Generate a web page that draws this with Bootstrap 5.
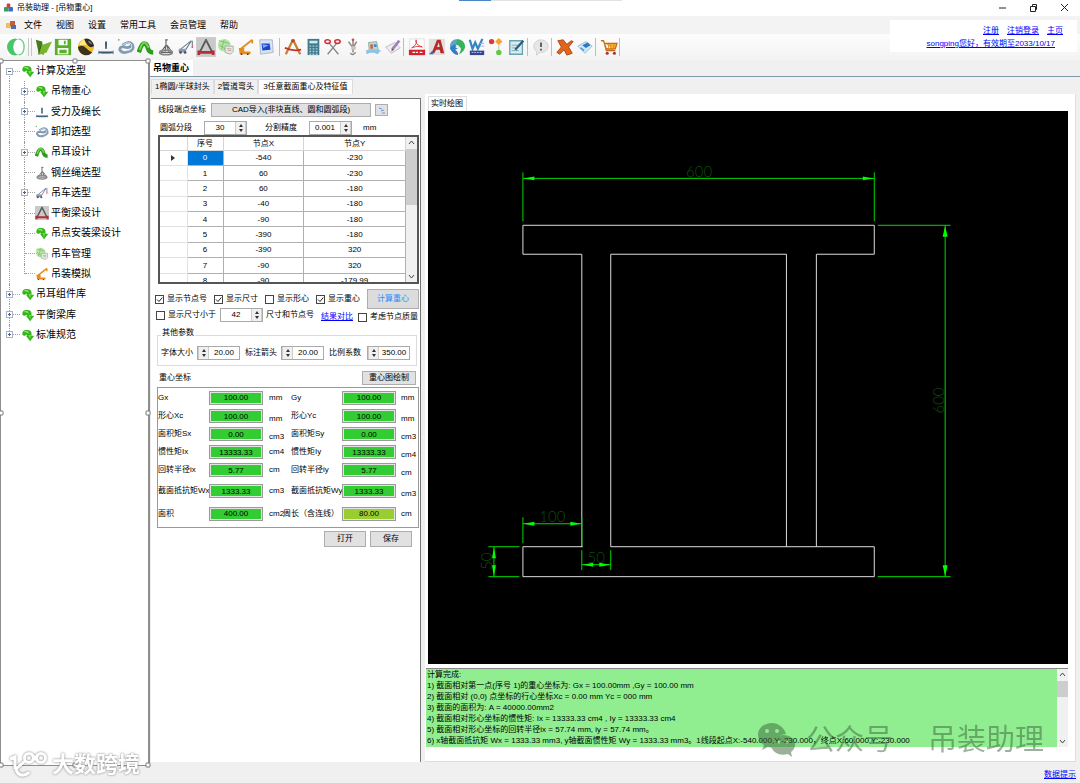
<!DOCTYPE html>
<html lang="zh-CN">
<head>
<meta charset="utf-8">
<meta name="viewport" content="width=device-width, initial-scale=1">
<title>吊装助理 - [吊物重心]</title>
<link href="https://cdn.jsdelivr.net/npm/bootstrap@5.3.0/dist/css/bootstrap.min.css" rel="stylesheet">
<script src="https://cdn.jsdelivr.net/npm/bootstrap@5.3.0/dist/js/bootstrap.bundle.min.js" defer></script>
<style>
body{font-family:"Liberation Sans","Noto Sans CJK SC",sans-serif;font-size:8px;line-height:12px;color:#000;background:#f0f0f0;height:100vh;overflow:hidden}
button,input,textarea{font:inherit;color:inherit}
a{color:#00f}
.titlebar{height:16px;background:#fff}
.titlebar h1{font-size:8px;line-height:12px;font-weight:400}
.winbtn{width:31px;height:16px;border:0;background:none;padding:0}
.accent{left:459px;top:0;width:163px;height:1px;background:#e2e2e2}
.accent i{display:block;width:32px;height:1px;background:#4a86c5}
.menubar{height:18px;background:#f3f3f3;font-size:9px;gap:14px;padding-left:6px}
.menubar svg{margin-right:-6px}
.menubar button{border:0;background:none;padding:0}
.tools{height:26px;padding:0 0 1px 6px;background:linear-gradient(#fdfdfd,#f3f3f3)}
.tools button{width:20px;height:20px;padding:1px;border:0;background:none}
.tools button svg{display:block;width:18px;height:18px}
.tools .wide{margin-right:3px}
.tools .active{background:#cfcfcf}
.sepa{width:4px;height:18px;border-left:1px solid #bdbdbd}
.sepa.dbl{width:7px;margin:0;border-left:0;background:linear-gradient(90deg,transparent 2px,#c6c6c6 2px 3px,transparent 3px 5px,#c6c6c6 5px 6px,transparent 6px)}
.account{top:20px;right:3px;width:187px;height:32px;background:#fff;padding:4px 14px 0 0;text-align:right;line-height:13px}
.account .second{padding-right:8px}
.tree{width:150px;background:#fff;border:solid #8e8e8e;border-width:1px 2px 1px 1px}
.tree ul{height:284px;font-size:10px}
.tree li{flex:1;display:flex;align-items:center;padding-left:5px;position:relative}
.tree li.sub{padding-left:20px}
.tree .ex{width:7px;height:7px;border:1px solid #a9b3c4;background:#fff;padding:0;position:relative;z-index:1;flex:none}
.tree .ex::before,.tree .ex.plus::after{content:"";position:absolute;left:1px;top:2px;width:3px;height:1px;background:#4b5f8f}
.tree .ex.plus::after{left:2px;top:1px;width:1px;height:3px}
.tree .dots{width:7px;border-top:1px dotted #a5a5a5}
.tree .dots.leaf{width:10px;margin-left:4px}
.tree li svg{width:14px;height:14px;margin:0 1px;flex:none}
.tree li.sub svg{margin:0}
.tree li.sub span{margin-left:2px}
.tree li::before{content:"";position:absolute;left:8px;top:0;bottom:0;border-left:1px dotted #999}
.tree li.first::before{top:10px}
.tree li.last::before{bottom:10px}
.tree li.sub::after{content:"";position:absolute;left:23px;top:0;bottom:0;border-left:1px dotted #999}
.tree li.end::after{bottom:10px}
.grip{width:5px;height:5px;background:#fff;border:1px solid #777;border-radius:1px;z-index:3}
.doctab{height:17px;border-bottom:1px solid #7d99ac;background:#f0f0f0}
.doctab span{background:#fff;font-size:9px;font-weight:700;line-height:16px;padding:0 4px 0 3px}
.subtabs{height:17px;padding:2px 0 0 1px}
.subtabs button{height:15px;padding:0 3px;border:1px solid #dcdcdc;border-bottom:0;background:#f0f0f0}
.subtabs button.on{background:#fff;padding:0 4px}
.form{width:270px;background:#fff;border-top:1px solid #777;border-right:1px solid #777;margin-left:1px;padding:4px 1px 0 7px}
.bx{border:1px solid #adadad;background:#e1e1e1;padding:0;text-align:center;line-height:12px;white-space:nowrap}
.spin{width:43px;height:14px;border:1px solid #aaa;background:#fff;flex:none}
.spin input{border:0;padding:0;min-width:0;width:100%;height:12px;text-align:center;background:none;outline:0}
.spin .ar{width:11px;background:#f0f0f0;border:solid #ccc;border-width:0 1px;padding:0;flex:none;display:flex;flex-direction:column;align-items:center;justify-content:center;gap:2px}
.ar i{border:2px solid transparent;border-top:0;border-bottom:3px solid #333}
.ar i+i{border-bottom:0;border-top:3px solid #333}
.gridbox{height:149px;border:2px solid #555;overflow:hidden}
.gridbox table{height:152px;table-layout:fixed;text-align:center;line-height:11px}
.gridbox th{font-weight:400;height:13px;padding:0;border:solid #d5d5d5;border-width:0 1px 1px 0}
.gridbox td{padding:0;border:1px solid #b0b0b0;border-width:0 1px 1px 0}
.gridbox td:first-child{border-color:#e2e2e2}
.gridbox .sel{background:#0078d7;color:#fff}
.c1{width:27px}
.c2{width:36px}
.sbar{width:11px;background:#f0f0f0;flex:none;display:flex;flex-direction:column;align-items:center}
.sbar svg{width:7px;height:12px;flex:none}
.sbar .thumb{width:11px;background:#cdcdcd}
.gthumb{height:56px}
.lthumb{height:16px}
.ck{display:flex;align-items:center;gap:3px;white-space:nowrap}
.ck input{appearance:none;width:9px;height:9px;border:1px solid #444;background:#fff;margin:0;flex:none}
.ck input:checked{background:url("data:image/svg+xml,%3Csvg xmlns='http://www.w3.org/2000/svg' viewBox='0 0 7 7'%3E%3Cpath d='M1 3.5L3 5.5 6.300 1.500' fill='none' stroke='%23222'/%3E%3C/svg%3E")}
.calc{width:54px;height:20px;background:#dcdcdc;color:#1e90ff}
.grpwrap{position:relative;margin:6px 0 0 -1px}
.grp{border:1px solid #dcdcdc;height:31px;margin:7px 2px 0 0}
.grp legend{position:absolute;top:-1px;left:4px;font-size:8px;line-height:12px;float:none;width:auto;margin:0;padding:0 1px;background:#fff}
.res{display:grid;grid-template-columns:51px 60px 22px 51px 59px 1fr;grid-template-rows:19px 18px 18px 18px 18px 24px 21px;align-items:center;border:1px solid #999;height:141px;margin-left:-1px;white-space:nowrap}
.res input{width:54px;height:14px;border:1px solid #9a9a9a;outline:1px solid #e3e3e3;outline-offset:-2px;background:#32cd32;text-align:center;padding:0}
.res input.alt{background:#9acd32}
.res .dn{padding-top:6px}
.peri{margin-left:-8px}
.rowa{height:14px}
.rowa label{width:53px}
.rowa #imp{width:160px;height:14px}
.rowa .pic{width:13px;height:12px;margin-left:4px;line-height:8px}
.rowb{height:14px;margin:4px 0 0 2px}
.rowb label{width:44px}
.rowb label+.spin+label{margin-left:18px}
.rowb span{margin-left:11px}
.rowc{height:20px;margin:5px 0 0 -3px;gap:7px}
.rowd{height:14px;margin:-1px 0 0 -2px}
.rowd .spin{margin:0 3px 0 4px}
.rowd a{margin:4px 5px 0 7px}
.rowd .ck:last-child{padding-top:4px}
.rowe{height:30px;padding:3px 0 0 3px}
.rowe label{width:36px}
.rowe .spin{margin-right:5px}
.rowe .spin:last-child{margin-left:2px}
.rowf{height:15px;margin:4px 3px 2px 1px}
.rowf .bx{width:54px;height:14px}
.rowg{gap:4px;margin:3px 7px 0 0}
.rowg .bx{width:42px;height:16px}
.view{background:#fff;margin:0 4px 0 4px;padding:2px 7px 0 3px;border-right:1px solid #ddd;border-bottom:1px solid #ddd}
.view .cap{height:15px;line-height:14px}
.cap span{border:1px solid #ddd;border-bottom:0;padding:0 3px 0 2px;display:inline-block}
.cad{background:#000;min-height:0}
.cad text{font-family:Lato,sans-serif;font-weight:300;font-size:15px;fill:#0a4d0a;text-anchor:middle}
.log{height:79px;margin:4px 0 0 -2px;border-top:1px solid #888;background:#90ee90}
.log textarea{border:0;padding:0 0 0 1px;resize:none;overflow:hidden;white-space:pre;line-height:11px;background:none;outline:0;display:block}
.tail{height:14px}
.foot{height:17px;padding-right:4px}
.wm{right:36px;bottom:21px;color:#3c643c;opacity:.5;font-size:29px;line-height:44px;pointer-events:none;gap:11px}
.wm .two{margin-left:24px}
.wm svg{width:38px;height:36px}
.brand{left:9px;bottom:2px;gap:4px;color:#fff;font-size:22px;font-weight:700;line-height:32px;filter:drop-shadow(0 0 1px #777);pointer-events:none;z-index:4}
.brand svg{width:39px;height:28px}
</style>
</head>
<body class="d-flex flex-column position-relative">
<svg class="d-none">
<symbol id="i-ring" viewBox="0 0 20 20"><rect width="20" height="20" fill="#fff"/><ellipse cx="9" cy="10" rx="9" ry="9.500" fill="#49c668"/><ellipse cx="13" cy="10" rx="6" ry="8.500" fill="#fff"/><path d="M13 1q6 1 6 9t-6 9" fill="none" stroke="#64d17e" stroke-width="1.500"/></symbol>
<symbol id="i-open" viewBox="0 0 20 20"><path d="M2 2l7 2 2 15-6-3z" fill="#457d1c"/><path d="M8 8l12-4-6 12-9 3z" fill="#78b52f"/><path d="M8 8l-3 10" stroke="#315d12"/></symbol>
<symbol id="i-save" viewBox="0 0 20 20"><path d="M1 1h18v18H1z" fill="#59ae2d"/><path d="M5 2h10v6H5zM4 11h12v7H4z" fill="#f5fff0"/><path d="M12 3v4M6 14h8M6 16h8" stroke="#59ae2d" stroke-width="2"/></symbol>
<symbol id="i-ball" viewBox="0 0 20 20"><circle cx="10" cy="10" r="9" fill="#efbd22"/><path d="M8 1q8-2 11 8-4 3-7-1Q9 4 8 1z" fill="#2b2b2b"/><path d="M1 10q5-3 9 1t7 5q-4 4-9 3-6-2-7-9z" fill="#3a3320"/><path d="M3 6q2-3 5-4 1 4 3 6-4-1-8 0z" fill="#ffe98d"/><path d="M12 3q3 0 5 4-3 0-5-4z" fill="#888"/></symbol>
<symbol id="i-force" viewBox="0 0 20 20"><path d="M10 4v8M2 16h16" stroke="#2f5268" stroke-width="2"/><path d="M2 14v4M18 14v4M5 17h10M9 10h2" stroke="#5c8bb0"/></symbol>
<symbol id="i-shackle" viewBox="0 0 20 20"><path d="M6 8q8-6 11-1 3 6-4 8-7 3-10-2 0-4 5-3 6 2 9-3" fill="none" stroke="#829bb2" stroke-width="3"/><path d="M6 8q7-5 10-1 2 5-4 7" fill="none" stroke="#d9e7f2"/><circle cx="2" cy="2" r="1" fill="#63ba4d"/></symbol>
<symbol id="i-arc" viewBox="0 0 20 20"><path d="M2 16Q5 6 8 6t4 5 6 5" fill="none" stroke="#2f9a1c" stroke-width="5"/><path d="M3 13Q6 5 8 5t5 6" fill="none" stroke="#79d94f" stroke-width="2"/></symbol>
<symbol id="i-rope" viewBox="0 0 20 20"><path d="M10 2v6q-4 5-5 8h11q-1-4-5-8M9 2h3M10 8l-1 7M11 8l2 7" fill="none" stroke="#666" stroke-width="1.300"/><ellipse cx="10" cy="16" rx="7" ry="2.500" fill="none" stroke="#888" stroke-width="2"/></symbol>
<symbol id="i-crane" viewBox="0 0 20 20"><path d="M2 14l14-11M9 14L16 3M17 3v6" fill="none" stroke="#6b7b96" stroke-width="1.200"/><path d="M2 12h8v4H2z" fill="#8b9bb5"/><circle cx="4" cy="16" r="1.500" fill="#555"/><circle cx="9" cy="16" r="1.500" fill="#555"/><circle cx="17" cy="10" r="1" fill="#cf4b54"/></symbol>
<symbol id="i-beam" viewBox="0 0 20 20"><rect width="20" height="20" fill="#c9c9c9"/><path d="M10 2L3 16M10 2l7 14" stroke="#555" stroke-width="2"/><path d="M1 16h18M2 14v5M18 14v5" stroke="#b72d35" stroke-width="3"/><path d="M9 1h2v4H9z" fill="#666"/></symbol>
<symbol id="i-manage" viewBox="0 0 20 20"><circle cx="8" cy="8" r="7" fill="#b5e5a4"/><path d="M2 3l12 3M3 8l10 7M8 2l-3 11" stroke="#7fbb70"/><path d="M9 9h9v6l-3 3-6-2z" fill="#e4ede3" stroke="#a0ada0"/><path d="M11 12h5M12 14h4" stroke="#c99"/></symbol>
<symbol id="i-sim" viewBox="0 0 20 20"><path d="M3 13L17 2M17 2v4" fill="none" stroke="#e48c1c" stroke-width="2"/><path d="M2 11h6v4h7v3H3z" fill="#e48c1c"/><circle cx="5" cy="18" r="1" fill="#5b3308"/><circle cx="12" cy="18" r="1" fill="#5b3308"/></symbol>
<symbol id="i-cube" viewBox="0 0 20 20"><path d="M3 2h14l1 14-14 2z" fill="#d9e3f3" stroke="#a8b4c8"/><path d="M5 6h9l1 7-9 1z" fill="#1845d0"/><path d="M6 7l7 1-6 3z" fill="#7da8ff"/></symbol>
<symbol id="i-compass" viewBox="0 0 20 20"><path d="M10 2L2 18M10 2l8 16" stroke="#c97e31" stroke-width="2.500"/><path d="M1 11q9 4 18 2" fill="none" stroke="#c0362a" stroke-width="2"/><circle cx="10" cy="3" r="2" fill="#b44a31"/></symbol>
<symbol id="i-calcu" viewBox="0 0 20 20"><rect x="4" y="1" width="13" height="18" fill="#41788c"/><path d="M6 3h9v3H6z" fill="#c7eced"/><path d="M6 9h9M6 12h9M6 15h9M6 18h9" stroke="#a7d5dd" stroke-width="1.500" stroke-dasharray="2 1.500"/></symbol>
<symbol id="i-cut" viewBox="0 0 20 20"><path d="M6 6l10 12M14 6L4 18" stroke="#888" stroke-width="1.500"/><ellipse cx="4" cy="4" rx="3" ry="2" fill="none" stroke="#d02e37" stroke-width="1.700"/><ellipse cx="15" cy="4" rx="3" ry="2" fill="none" stroke="#d02e37" stroke-width="1.700"/></symbol>
<symbol id="i-hook" viewBox="0 0 20 20"><path d="M5 4l5 7 4-7M10 2v14M7 17q3 3 6-1" fill="none" stroke="#8d8380" stroke-width="1.600"/><path d="M8 9h5v4H8z" fill="#c9c3bd"/><circle cx="10" cy="2" r="1.500" fill="#c0544b"/></symbol>
<symbol id="i-report" viewBox="0 0 20 20"><path d="M5 5l9-1 2 10-10 1z" fill="#b9ddc4" stroke="#8cac9d"/><path d="M2 14q6-3 17 0l-4 4q-6-3-12 0z" fill="#8cc4e8"/><path d="M7 7h3v5H7z" fill="#ce6558"/><path d="M11 7h3v3h-3z" fill="#458ac5"/></symbol>
<symbol id="i-pencil" viewBox="0 0 20 20"><path d="M2 10l6 7 10-6-6-6z" fill="#eee" stroke="#bbb"/><path d="M9 13L17 3" stroke="#a180bd" stroke-width="3"/><path d="M8 15l1-3 2 1z" fill="#6f5033"/></symbol>
<symbol id="i-pdf" viewBox="0 0 20 20"><path d="M2 1h16v18H2z" fill="#fff" stroke="#ddd"/><path d="M1 13h18v6H1z" fill="#d3222a"/><path d="M4 11q7-4 5-9-2 5 7 8-6-2-12 1" fill="none" stroke="#e33b3d"/><path d="M5 16h3M9 16h2M13 16h3" stroke="#fff" stroke-width="1.500"/></symbol>
<symbol id="i-acad" viewBox="0 0 20 20"><path d="M1 1h18v18H1z" fill="#e3dfdc"/><path d="M4 17L10 2h4l4 15h-4l-1-4H9l-2 4zM10 10h3l-1-5z" fill="#b52a2a"/><path d="M1 18l4-4 1 4z" fill="#3a6fb6"/></symbol>
<symbol id="i-globe" viewBox="0 0 20 20"><path d="M4 4Q9-1 14 4L9 8 3 13Q1 8 4 4z" fill="#5ba4cf"/><path d="M10 1q9 1 9 9-1 6-7 8 4-6 1-8l-4-3z" fill="#35b45a"/><path d="M2 11q3 7 9 8 1-3-3-6l4-2-5-4z" fill="#367ec4"/><path d="M8 10l4-2-1 4z" fill="#fff"/></symbol>
<symbol id="i-word" viewBox="0 0 20 20"><path d="M2 2l3 10 3-7 3 7 5-11" fill="none" stroke="#3686c6" stroke-width="2.500"/><path d="M2 14h16v5H2z" fill="#33468f"/><path d="M4 16h12" stroke="#c9d4f2" stroke-dasharray="2 1"/><path d="M13 6h5M13 9h5" stroke="#8cb8df"/></symbol>
<symbol id="i-nodes" viewBox="0 0 20 20"><circle cx="4" cy="4" r="3" fill="#d9393f"/><path d="M12 0l4 4-4 4-4-4z" fill="#f3a237"/><circle cx="12" cy="16" r="3" fill="#61cb3f"/><path d="M12 8v5" stroke="#bbb"/></symbol>
<symbol id="i-edit" viewBox="0 0 20 20"><path d="M2 3h14v15H2z" fill="#d7eef1" stroke="#6aa2b0" stroke-width="1.500"/><path d="M4 8h8M4 11h5M4 14h8" stroke="#75a9b5"/><path d="M8 13L17 3" stroke="#31597b" stroke-width="2.500"/></symbol>
<symbol id="i-tip" viewBox="0 0 20 20"><path d="M2 9a8 7 0 1 1 7 7l-4 3V15a8 7 0 0 1-3-6z" fill="#e6e6e6" stroke="#cfcfcf"/><path d="M10 5v5M10 12v2" stroke="#555" stroke-width="2"/></symbol>
<symbol id="i-del" viewBox="0 0 20 20"><path d="M2 3l6-1 4 5 5-4 2 1-5 6 4 7-6 2-3-6-5 5-3-2 5-6z" fill="#e3641b" stroke="#a8430e"/></symbol>
<symbol id="i-eraser" viewBox="0 0 20 20"><path d="M2 9l9-5 7 5-8 8z" fill="#cde8f6" stroke="#8fc0dd"/><path d="M7 8l6-3 3 3-5 3z" fill="#3274bf"/><path d="M5 11l4 3" stroke="#5a9ed0" stroke-width="2"/></symbol>
<symbol id="i-cart" viewBox="0 0 20 20"><path d="M1 3h3l3 11h10M5 6h14l-2 6H7z" fill="#f6b42c" stroke="#c46b14" stroke-width="1.300"/><path d="M9 6l1 6M12 6v6M16 6l-1 6" stroke="#dd7a20"/><circle cx="8" cy="17" r="1.700" fill="#a33"/><circle cx="16" cy="17" r="1.700" fill="#a33"/></symbol>
<symbol id="i-green" viewBox="0 0 20 20"><path d="M2 7q1-5 7-4 6 0 6 5v3h4l-6 8-6-8h2q-1-3-3 0-5 0-4-4z" fill="#37b51c"/><path d="M4 6q2-3 6-1l1 3q-4-3-7-2z" fill="#9cec78"/><path d="M11 10l3 0-1 6z" fill="#85dd5b"/></symbol>
</svg>

<header class="titlebar d-flex align-items-center flex-shrink-0">
<svg class="ms-1 me-1" width="9" height="10" viewBox="0 0 10 10" aria-hidden="true"><rect x="3" width="4" height="5" rx="1" fill="#c8453d"/><rect y="4" width="5" height="5" rx="1" fill="#3b9c57"/><rect x="5" y="4" width="5" height="5" rx="1" fill="#3f6cc0"/></svg>
<h1 class="m-0 flex-grow-1">吊装助理 - [吊物重心]</h1>
<button class="winbtn" aria-label="最小化"><svg width="9" height="9"><path d="M1 5h7" stroke="#222"/></svg></button>
<button class="winbtn" aria-label="还原"><svg width="9" height="9"><path d="M1.500 3.500h5v5h-5zM3.500 3V1.500h4v5H7" fill="none" stroke="#222"/></svg></button>
<button class="winbtn" aria-label="关闭"><svg width="9" height="9"><path d="M1 1l7 7M8 1L1 8" stroke="#222"/></svg></button>
</header>
<div class="accent position-absolute"><i></i></div>
<nav class="menubar d-flex align-items-center flex-shrink-0">
<svg width="10" height="10" viewBox="0 0 10 10" aria-hidden="true"><path d="M0 3h5v5H0z" fill="#eac05b"/><path d="M4 1h5v5H4z" fill="#cb5c39"/><path d="M5 5h5v4H5z" fill="#4770b5"/></svg>
<button>文件</button><button>视图</button><button>设置</button><button>常用工具</button><button>会员管理</button><button>帮助</button>
</nav>
<div class="tools d-flex align-items-center flex-shrink-0" role="toolbar" aria-label="工具栏">
<button><svg><use href="#i-ring"/></svg></button><span class="sepa dbl"></span>
<button><svg><use href="#i-open"/></svg></button><button class="wide"><svg><use href="#i-save"/></svg></button>
<button><svg><use href="#i-ball"/></svg></button><button><svg><use href="#i-force"/></svg></button><button><svg><use href="#i-shackle"/></svg></button><button><svg><use href="#i-arc"/></svg></button><button><svg><use href="#i-rope"/></svg></button><button><svg><use href="#i-crane"/></svg></button><button class="active"><svg><use href="#i-beam"/></svg></button><button><svg><use href="#i-manage"/></svg></button><button><svg><use href="#i-sim"/></svg></button><button class="wide"><svg><use href="#i-cube"/></svg></button><span class="sepa"></span>
<button><svg><use href="#i-compass"/></svg></button><button><svg><use href="#i-calcu"/></svg></button><button><svg><use href="#i-cut"/></svg></button><button><svg><use href="#i-hook"/></svg></button><button><svg><use href="#i-report"/></svg></button><button><svg><use href="#i-pencil"/></svg></button><span class="sepa"></span>
<button><svg><use href="#i-pdf"/></svg></button><button><svg><use href="#i-acad"/></svg></button><button><svg><use href="#i-globe"/></svg></button><button><svg><use href="#i-word"/></svg></button><button><svg><use href="#i-nodes"/></svg></button><button><svg><use href="#i-edit"/></svg></button><span class="sepa"></span>
<button><svg><use href="#i-tip"/></svg></button><span class="sepa"></span>
<button><svg><use href="#i-del"/></svg></button><button><svg><use href="#i-eraser"/></svg></button><span class="sepa"></span>
<button><svg><use href="#i-cart"/></svg></button><span class="sepa"></span>
</div>
<div class="account position-absolute"><div class="d-flex justify-content-end gap-2"><a href="#">注册</a><a href="#">注销登录</a><a href="#">主页</a></div><div class="second"><a href="#">songping您好，有效期至2033/10/17</a></div></div>

<div class="d-flex flex-grow-1" style="min-height:0">
<aside class="tree flex-shrink-0 position-relative">
<ul class="list-unstyled m-0 d-flex flex-column">
<li class="first"><button class="ex" aria-label="折叠"></button><i class="dots"></i><svg><use href="#i-green"/></svg><span>计算及选型</span></li>
<li class="sub"><button class="ex plus" aria-label="展开"></button><i class="dots"></i><svg><use href="#i-green"/></svg><span>吊物重心</span></li>
<li class="sub"><button class="ex plus" aria-label="展开"></button><i class="dots"></i><svg><use href="#i-force"/></svg><span>受力及绳长</span></li>
<li class="sub"><i class="dots leaf"></i><svg><use href="#i-shackle"/></svg><span>卸扣选型</span></li>
<li class="sub"><button class="ex plus" aria-label="展开"></button><i class="dots"></i><svg><use href="#i-arc"/></svg><span>吊耳设计</span></li>
<li class="sub"><i class="dots leaf"></i><svg><use href="#i-rope"/></svg><span>钢丝绳选型</span></li>
<li class="sub"><button class="ex plus" aria-label="展开"></button><i class="dots"></i><svg><use href="#i-crane"/></svg><span>吊车选型</span></li>
<li class="sub"><i class="dots leaf"></i><svg><use href="#i-beam"/></svg><span>平衡梁设计</span></li>
<li class="sub"><i class="dots leaf"></i><svg><use href="#i-green"/></svg><span>吊点安装梁设计</span></li>
<li class="sub"><i class="dots leaf"></i><svg><use href="#i-manage"/></svg><span>吊车管理</span></li>
<li class="sub end"><i class="dots leaf"></i><svg><use href="#i-sim"/></svg><span>吊装模拟</span></li>
<li><button class="ex plus" aria-label="展开"></button><i class="dots"></i><svg><use href="#i-green"/></svg><span>吊耳组件库</span></li>
<li><button class="ex plus" aria-label="展开"></button><i class="dots"></i><svg><use href="#i-green"/></svg><span>平衡梁库</span></li>
<li class="last"><button class="ex plus" aria-label="展开"></button><i class="dots"></i><svg><use href="#i-green"/></svg><span>标准规范</span></li>
</ul>
<i class="grip position-absolute top-0 start-0 translate-middle"></i><i class="grip position-absolute top-0 start-50 translate-middle"></i><i class="grip position-absolute top-0 start-100 translate-middle"></i>
<i class="grip position-absolute top-50 start-0 translate-middle"></i><i class="grip position-absolute top-50 start-100 translate-middle"></i>
<i class="grip position-absolute top-100 start-0 translate-middle"></i><i class="grip position-absolute top-100 start-50 translate-middle"></i><i class="grip position-absolute top-100 start-100 translate-middle"></i>
</aside>

<main class="d-flex flex-column flex-grow-1" style="min-width:0">
<div class="doctab d-flex"><span>吊物重心</span></div>
<div class="subtabs d-flex" role="tablist"><button role="tab">1椭圆/半球封头</button><button role="tab">2管道弯头</button><button role="tab" class="on">3任意截面重心及特征值</button></div>
<div class="d-flex flex-grow-1 pb-1" style="min-height:0">
<section class="form flex-shrink-0 mt-1">
<div class="rowa d-flex align-items-center"><label for="imp">线段端点坐标</label><button id="imp" class="bx">CAD导入(非块直线、圆和圆弧段)</button><button class="bx pic" aria-label="图示"><svg width="10" height="10" viewBox="0 0 10 10"><path d="M2 3l3 1M4 6l3-1M5 8h3" stroke="#6b9be0"/></svg></button></div>
<div class="rowb d-flex align-items-center"><label for="seg">圆弧分段</label><div class="spin d-flex"><input id="seg" value="30"><button class="ar" aria-label="调整"><i></i><i></i></button></div><label for="pre">分割精度</label><div class="spin d-flex"><input id="pre" value="0.001"><button class="ar" aria-label="调整"><i></i><i></i></button></div><span>mm</span></div>
<div class="gridbox d-flex">
<table class="flex-grow-1"><colgroup><col class="c1"><col class="c2"><col><col></colgroup>
<thead><tr><th></th><th>序号</th><th>节点X</th><th>节点Y</th></tr></thead>
<tbody>
<tr><td><svg width="5" height="6"><path d="M0 0l4 3-4 3z" fill="#333"/></svg></td><td class="sel">0</td><td>-540</td><td>-230</td></tr>
<tr><td></td><td>1</td><td>60</td><td>-230</td></tr>
<tr><td></td><td>2</td><td>60</td><td>-180</td></tr>
<tr><td></td><td>3</td><td>-40</td><td>-180</td></tr>
<tr><td></td><td>4</td><td>-90</td><td>-180</td></tr>
<tr><td></td><td>5</td><td>-390</td><td>-180</td></tr>
<tr><td></td><td>6</td><td>-390</td><td>320</td></tr>
<tr><td></td><td>7</td><td>-90</td><td>320</td></tr>
<tr><td></td><td>8</td><td>-90</td><td>-179.99</td></tr>
</tbody></table>
<div class="sbar"><svg viewBox="0 0 7 12"><path d="M1 7l2.500-3L6 7" fill="none" stroke="#444"/></svg><div class="thumb gthumb"></div><svg class="mt-auto" viewBox="0 0 7 12"><path d="M1 5l2.500 3L6 5" fill="none" stroke="#444"/></svg></div>
</div>
<div class="rowc d-flex align-items-center"><label class="ck"><input type="checkbox" checked>显示节点号</label><label class="ck"><input type="checkbox" checked>显示尺寸</label><label class="ck"><input type="checkbox">显示形心</label><label class="ck"><input type="checkbox" checked>显示重心</label><button class="bx calc ms-auto">计算重心</button></div>
<div class="rowd d-flex align-items-center"><label class="ck"><input type="checkbox">显示尺寸小于</label><div class="spin d-flex"><input aria-label="尺寸下限" value="42"><button class="ar" aria-label="调整"><i></i><i></i></button></div><span>尺寸和节点号</span><a href="#">结果对比</a><label class="ck"><input type="checkbox">考虑节点质量</label></div>
<fieldset class="grpwrap"><div class="grp"><legend>其他参数</legend>
<div class="rowe d-flex align-items-center"><label for="f1">字体大小</label><div class="spin d-flex"><button class="ar" aria-label="调整"><i></i><i></i></button><input id="f1" value="20.00"></div><label for="f2">标注箭头</label><div class="spin d-flex"><button class="ar" aria-label="调整"><i></i><i></i></button><input id="f2" value="20.00"></div><label for="f3">比例系数</label><div class="spin d-flex"><button class="ar" aria-label="调整"><i></i><i></i></button><input id="f3" value="350.00"></div></div></div></fieldset>
<div class="rowf d-flex align-items-center justify-content-between"><span>重心坐标</span><button class="bx">重心图绘制</button></div>
<div class="res">
<label for="r1">Gx</label><input id="r1" value="100.00"><span>mm</span><label for="s1">Gy</label><input id="s1" value="100.00"><span>mm</span>
<label for="r2">形心Xc</label><input id="r2" value="100.00"><span class="dn">mm</span><label for="s2">形心Yc</label><input id="s2" value="100.00"><span class="dn">mm</span>
<label for="r3">面积矩Sx</label><input id="r3" value="0.00"><span class="dn">cm3</span><label for="s3">面积矩Sy</label><input id="s3" value="0.00"><span class="dn">cm3</span>
<label for="r4">惯性矩Ix</label><input id="r4" value="13333.33"><span>cm4</span><label for="s4">惯性矩Iy</label><input id="s4" value="13333.33"><span class="dn">cm4</span>
<label for="r5">回转半径ix</label><input id="r5" value="5.77"><span>cm</span><label for="s5">回转半径iy</label><input id="s5" value="5.77"><span class="dn">cm</span>
<label for="r6">截面抵抗矩Wx</label><input id="r6" value="1333.33"><span>cm3</span><label for="s6">截面抵抗矩Wy</label><input id="s6" value="1333.33"><span class="dn">cm3</span>
<label for="r7">面积</label><input id="r7" value="400.00"><span>cm2</span><label for="s7" class="peri">周长（含连线）</label><input id="s7" class="alt" value="80.00"><span>cm</span>
</div>
<div class="rowg d-flex justify-content-end"><button class="bx">打开</button><button class="bx">保存</button></div>
</section>
<section class="view d-flex flex-column flex-grow-1" style="min-width:0">
<div class="cap"><span>实时绘图</span></div>
<svg class="cad w-100 flex-grow-1" viewBox="428 111 640 554" role="img" aria-label="截面图">
<g fill="none" stroke="#ddd" stroke-width="1"><path d="M582.500 547.500h-60v30h352v-30h-264v-293h176v293M816.500 547.500v-293h58v-29h-352v29h59v293"/></g>
<g fill="none" stroke="#00d800"><path d="M522.500 172.500v49M874.500 172.500v49M522.500 178.500h352M878 225.500h73M878 577.500h73M945.500 225.500v352M522.500 518v26M581.500 518v28M522.500 524.500h59M581.500 551v20M610.500 551v20M581.500 565.500h29M488 547.500h31M488 577.500h31M493.500 547.500v30"/></g>
<g fill="#00ff00"><path d="M523 178.500l11-2v4zM874 178.500l-11-2v4zM945.500 226l-2.500 11h5zM945.500 577l-2.500-11h5zM523 524.500l11-2v4zM581 524.500l-11-2v4zM582 565.500l11-2v4zM610 565.500l-11-2v4zM493.500 548l-2 11h4zM493.500 577l-2-11h4z"/></g>
<text x="699" y="177">600</text><text x="552" y="523">100</text><text x="596" y="564">50</text><text transform="translate(944 401) rotate(-90)">600</text><text transform="translate(492 562) rotate(-90)">50</text>
</svg>
<div class="log d-flex flex-shrink-0"><textarea class="flex-grow-1" readonly aria-label="计算结果">计算完成:
1) 截面相对第一点(序号 1)的重心坐标为: Gx = 100.00mm ,Gy = 100.00 mm
2) 截面相对 (0,0) 点坐标的行心坐标Xc = 0.00 mm Yc = 000 mm
3) 截面的面积为: A = 40000.00mm2
4) 截面相对形心坐标的惯性矩: Ix = 13333.33 cm4 , Iy = 13333.33 cm4
5) 截面相对形心坐标的回转半径ix = 57.74 mm, iy = 57.74 mm。
6) x轴截面抵抗矩 Wx = 1333.33 mm3, y轴截面惯性矩 Wy = 1333.33 mm3。1线段起点X:-540.000,Y:-230.000，终点X:60.000,Y:-230.000</textarea>
<div class="sbar"><svg viewBox="0 0 7 12"><path d="M1 7l2.500-3L6 7" fill="none" stroke="#444"/></svg><div class="thumb lthumb"></div><svg class="mt-auto" viewBox="0 0 7 12"><path d="M1 5l2.500 3L6 5" fill="none" stroke="#444"/></svg></div></div>
<div class="tail flex-shrink-0"></div>
</section>
</div>
</main>
</div>
<footer class="foot d-flex justify-content-end align-items-center flex-shrink-0"><a href="#">数据提示</a></footer>
<div class="wm d-flex align-items-center position-absolute"><svg viewBox="0 0 38 36"><path d="M15 1C7 1 1 6 1 13q0 6 6 10l-2 5 6-3q3 1 6 1-3-12 12-14C27 5 21 1 15 1z" fill="currentColor"/><path d="M26 13c-7 0-12 4-12 10s8 12 17 9l4 3-1-5q4-3 4-7c0-6-5-10-12-10z" fill="currentColor"/><g fill="#90ee90"><circle cx="10" cy="9" r="2"/><circle cx="20" cy="9" r="2"/><circle cx="22" cy="20" r="1.500"/><circle cx="30" cy="20" r="1.500"/></g></svg><span>公众号</span><span class="two">吊装助理</span></div>
<div class="brand d-flex align-items-center position-absolute"><svg viewBox="0 0 39 28" fill="none" stroke="#fff" stroke-width="3"><path d="M1 8l5-2v12M17 9l-10 9q2 7 8 6 4-1 5-3"/><circle cx="20" cy="7" r="4.500"/><circle cx="32" cy="7" r="4.500"/><path d="M23 4l6 6M23 10l6-6"/></svg><span>大数跨境</span></div>
</body>
</html>
